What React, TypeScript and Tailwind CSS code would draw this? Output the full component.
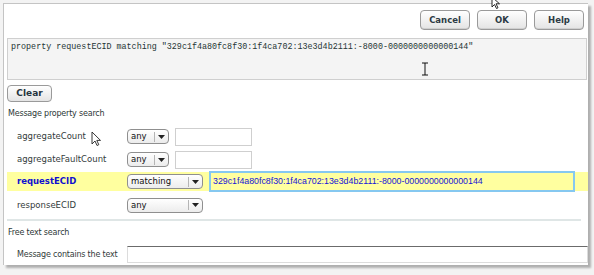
import React from "react";

const sans = { fontFamily: '"DejaVu Sans", Verdana, sans-serif' };

function Btn({ label }: { label: string }) {
  return (
    <button className="w-[50px] h-[20px] rounded-[4px] border border-[#9a9a9a] bg-gradient-to-b from-white to-[#e4e4e4] text-[8.5px] leading-none font-bold text-[#2c3a44] shadow-[inset_0_-1px_0_#cfcfcf]">
      {label}
    </button>
  );
}

function Select({ value, w }: { value: string; w: string }) {
  return (
    <div
      className={`${w} h-[15px] flex items-center rounded-[4px] border border-[#8f8f8f] bg-gradient-to-b from-white to-[#ececec] text-[8.5px] text-[#111]`}
    >
      <span className="flex-1 pl-[3px] leading-none">{value}</span>
      <span className="w-[14px] h-[10px] border-l border-[#b5b5b5] flex items-center justify-center">
        <svg width="7" height="4" viewBox="0 0 7 4">
          <path d="M0 0h7L3.5 4z" fill="#222" />
        </svg>
      </span>
    </div>
  );
}

function Row({
  label,
  children,
  cls,
  hl,
}: {
  label: string;
  children: React.ReactNode;
  cls: string;
  hl?: boolean;
}) {
  return (
    <div className={`${cls} flex items-center pl-[10px] ${hl ? "bg-[#ffff9f]" : ""}`}>
      <span
        className={`w-[110px] shrink-0 whitespace-nowrap text-[8.5px] leading-none ${
          hl ? "font-bold text-[#1010d0]" : "text-[#333b3b]"
        }`}
      >
        {label}
      </span>
      {children}
    </div>
  );
}

export default function App() {
  return (
    <div className="relative w-[594px] h-[275px] bg-[#f3f3f3] overflow-hidden" style={sans}>
      <div className="ml-[3px] mt-[3px] w-[585px] h-[262px] bg-white border-l border-t border-[#c4c4c4] shadow-[3px_3px_2px_rgba(0,0,0,0.28)] flex flex-col">
        <div className="h-[20px] mt-[6px] flex justify-end gap-[7px] pr-[4px]">
          <Btn label="Cancel" />
          <Btn label="OK" />
          <Btn label="Help" />
        </div>

        <div
          className="ml-[3px] mr-[1px] mt-[8px] h-[42px] bg-[#f4f4f4] border border-[#cfcfcf] pl-[3px] pt-[3px] text-[8.4px] leading-[10px] text-[#253535] whitespace-nowrap"
          style={{ fontFamily: '"Liberation Mono", "DejaVu Sans Mono", monospace' }}
        >
          property requestECID matching "329c1f4a80fc8f30:1f4ca702:13e3d4b2111:-8000-0000000000000144"
        </div>

        <div className="ml-[3px] mt-[5px] h-[17px] flex">
          <button className="w-[45px] h-[17px] rounded-[4px] border border-[#9a9a9a] bg-gradient-to-b from-white to-[#e4e4e4] text-[9px] leading-none font-bold text-[#26343e]">
            Clear
          </button>
        </div>

        <div className="ml-[4px] mt-[6px] h-[12px] text-[8px] tracking-[-0.2px] leading-none text-[#2d3838] flex items-center">
          Message property search
        </div>

        <div className="ml-[3px] mt-[5px] flex flex-col">
          <Row label="aggregateCount" cls="h-[23px]">
            <Select value="any" w="w-[42px]" />
            <div className="ml-[6px] w-[77px] h-[18px] border border-[#cfcfcf] bg-white" />
          </Row>
          <Row label="aggregateFaultCount" cls="h-[23px]">
            <Select value="any" w="w-[42px]" />
            <div className="ml-[6px] w-[77px] h-[18px] border border-[#cfcfcf] bg-white" />
          </Row>
          <Row label="requestECID" cls="h-[19px] mt-[1px]" hl>
            <Select value="matching" w="w-[76px]" />
            <div
              className="ml-[6px] w-[366px] h-[21px] shrink-0 border-2 border-[#86c8f0] bg-[#ffff9f] flex items-center pl-[2px] text-[8.8px] leading-none text-[#1414d8]"
              style={{ fontFamily: '"Liberation Sans", Arial, sans-serif' }}
            >
              329c1f4a80fc8f30:1f4ca702:13e3d4b2111:-8000-0000000000000144
            </div>
          </Row>
          <Row label="responseECID" cls="h-[22px] mt-[3px]">
            <Select value="any" w="w-[76px]" />
          </Row>
        </div>

        <div className="ml-[3px] mr-[7px] mt-[3px] h-[2px] bg-[#dfe6e6]" />

        <div className="ml-[4px] mt-[6px] h-[12px] text-[8px] tracking-[-0.2px] leading-none text-[#2d3838] flex items-center">
          Free text search
        </div>

        <div className="ml-[3px] mt-[7px] h-[17px] flex items-center pl-[10px]">
          <span className="w-[110px] shrink-0 whitespace-nowrap text-[8px] tracking-[-0.2px] leading-none text-[#333b3b]">
            Message contains the text
          </span>
          <div className="flex-1 h-[17px] border border-[#dcdcdc] border-t-[#6b6b6b] bg-white" />
        </div>
      </div>

      {/* mouse pointers caught in the screenshot */}
      <svg className="absolute left-[491px] top-[-4px]" width="11" height="13" viewBox="0 0 11 13">
        <path d="M1 1v10l2.5-2.5 2 4 1.5-.7-2-4H8.5z" fill="#fff" stroke="#111" strokeWidth="0.9" />
      </svg>
      <svg className="absolute left-[91px] top-[131px]" width="11" height="16" viewBox="0 0 11 16">
        <path d="M1 1v12l3-3 2 4.5 1.8-.8-2-4.3H9.5z" fill="#fff" stroke="#222" strokeWidth="0.9" />
      </svg>
      <svg className="absolute left-[421px] top-[62px]" width="8" height="14" viewBox="0 0 8 14">
        <path d="M1 1h6M1 13h6M4 1v12" stroke="#111" strokeWidth="1" fill="none" />
      </svg>
    </div>
  );
}
